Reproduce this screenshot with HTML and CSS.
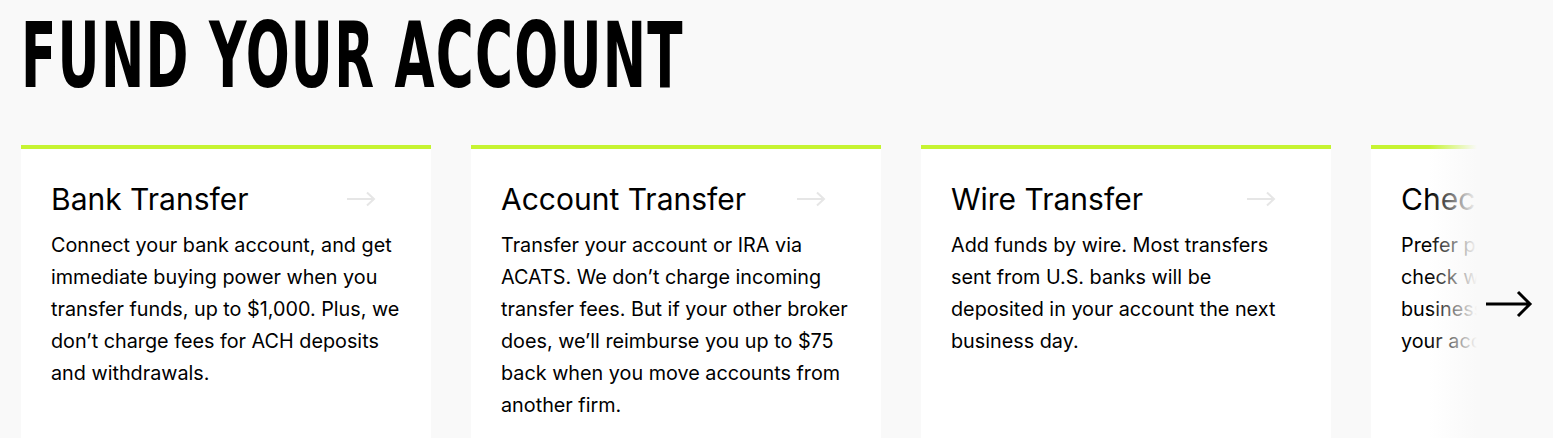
FILE: index.html
```html
<!DOCTYPE html>
<html lang="en">
<head>
  <meta charset="UTF-8" />
  <meta name="viewport" content="width=device-width, initial-scale=1.0"/>
  <title>Fund Your Account</title>
  <link rel="stylesheet" href="styles.css">
</head>
<body>
  <section class="fund">
    <h1 class="fund-title"><span>FUND YOUR ACCOUNT</span></h1>

    <div class="slider">
      <div class="track">
        <div class="card">
          <div class="card-head">
            <h3>Bank Transfer</h3>
            <svg class="card-arrow" width="30" height="16" viewBox="0 0 30 16"><path d="M1 8H28M21 1.5L28 8L21 14.5" fill="none" stroke="currentColor" stroke-width="2"/></svg>
          </div>
          <p>Connect your bank account, and get immediate buying power when you transfer funds, up to $1,000. Plus, we don’t charge fees for ACH deposits and withdrawals.</p>
        </div>
        <div class="card">
          <div class="card-head">
            <h3>Account Transfer</h3>
            <svg class="card-arrow" width="30" height="16" viewBox="0 0 30 16"><path d="M1 8H28M21 1.5L28 8L21 14.5" fill="none" stroke="currentColor" stroke-width="2"/></svg>
          </div>
          <p>Transfer your account or IRA via ACATS. We don’t charge incoming transfer fees. But if your other broker does, we’ll reimburse you up to $75 back when you move accounts from another firm.</p>
        </div>
        <div class="card">
          <div class="card-head">
            <h3>Wire Transfer</h3>
            <svg class="card-arrow" width="30" height="16" viewBox="0 0 30 16"><path d="M1 8H28M21 1.5L28 8L21 14.5" fill="none" stroke="currentColor" stroke-width="2"/></svg>
          </div>
          <p>Add funds by wire. Most transfers sent from U.S. banks will be deposited in your account the next business day.</p>
        </div>
        <div class="card">
          <div class="card-head">
            <h3>Check Deposit</h3>
            <svg class="card-arrow" width="30" height="16" viewBox="0 0 30 16"><path d="M1 8H28M21 1.5L28 8L21 14.5" fill="none" stroke="currentColor" stroke-width="2"/></svg>
          </div>
          <p>Prefer paper? Mail us a personal<br>check with your info. Allow five<br>business days for it to reach<br>your account.</p>
        </div>
      </div>
      <div class="fade"></div>
      <button class="next" aria-label="Next">
        <svg width="48" height="28" viewBox="0 0 48 28"><path d="M1 14H45M33 2L45 14L33 26" fill="none" stroke="#000" stroke-width="3"/></svg>
      </button>
    </div>
  </section>
</body>
</html>
```

FILE: styles.css
```css
body {
  margin: 0;
  background-color: #f9f9f9;
  font-family: Inter, "Noto Sans", sans-serif;
  color: #000;
  overflow: hidden;
}
.fund {
  padding: 0 0 0 21px;
}
.fund-title {
  margin: 0;
  height: 145px;
  font-family: "DejaVu Sans Condensed", "DejaVu Sans", sans-serif;
  font-weight: bold;
  font-size: 91px;
  line-height: 112px;
  white-space: nowrap;
}
.fund-title span {
  display: inline-block;
  letter-spacing: 2px;
  transform: scaleX(0.632);
  transform-origin: left center;
}
.slider {
  position: relative;
  overflow: hidden;
}
.track {
  display: flex;
  gap: 40px;
}
.card {
  flex: 0 0 410px;
  box-sizing: border-box;
  min-height: 320px;
  background-color: #fff;
  border-top: 4px solid #c6f432;
  padding: 32px 24px 30px 30px;
}
.card-head {
  display: flex;
  align-items: center;
  justify-content: space-between;
}
.card-head h3 {
  margin: 0;
  font-size: 30px;
  font-weight: 400;
  line-height: 36px;
}
.card-arrow {
  color: #e6e6e6;
  margin-right: 31px;
}
.card p {
  margin: 12px 0 0;
  font-size: 19.8px;
  line-height: 32px;
  white-space: nowrap;
}
.card:not(:last-child) p {
  white-space: normal;
}
.fade {
  position: absolute;
  top: 0;
  bottom: 0;
  left: 1408px;
  right: 0;
  background: linear-gradient(to right, rgba(249, 249, 249, 0) 0, #f9f9f9 48px);
}
.next {
  position: absolute;
  top: 145px;
  left: 1464px;
  background: none;
  border: none;
  padding: 0;
  cursor: pointer;
}
```
